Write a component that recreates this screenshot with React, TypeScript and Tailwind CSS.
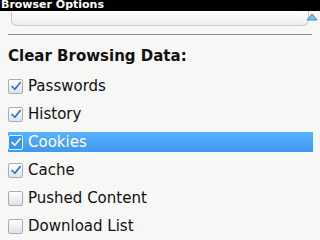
const items = [
  { label: "Passwords", checked: true },
  { label: "History", checked: true },
  { label: "Cookies", checked: true, selected: true },
  { label: "Cache", checked: true },
  { label: "Pushed Content", checked: false },
  { label: "Download List", checked: false },
];

const Check = ({ checked, selected }: { checked: boolean; selected?: boolean }) => (
  <div
    className={
      "w-[15px] h-[15px] rounded-[2px] border flex items-center justify-center shrink-0 " +
      (selected
        ? "border-[#e6f2ff] bg-[#3d95ec]"
        : "border-[#a9adb2] bg-gradient-to-b from-[#ffffff] to-[#dfe3e7]")
    }
  >
    {checked && (
      <svg width="12" height="12" viewBox="0 0 12 12">
        <path
          d="M2 6.5 L4.8 9.3 L10.3 2.5"
          fill="none"
          stroke={selected ? "#ffffff" : "#2b6fc4"}
          strokeWidth="1.6"
          strokeLinecap="round"
          strokeLinejoin="round"
        />
      </svg>
    )}
  </div>
);

export default function App() {
  return (
    <div className="w-[320px] h-[240px] overflow-hidden bg-[#f7f7f5] font-['DejaVu_Sans',sans-serif] flex flex-col">
      <div className="h-[11px] shrink-0 bg-black text-white text-[11px] font-bold leading-[9px] pl-[1px] overflow-hidden">
        Browser Options
      </div>
      <div className="mx-[11px] h-[15px] shrink-0 rounded-b-[6px] border border-t-0 border-[#c9ccce] bg-gradient-to-b from-[#ffffff] to-[#eceef0] relative">
        <svg className="absolute right-[-10px] top-[2px]" width="12" height="8" viewBox="0 0 12 8">
          <path d="M6 1 L11 7 L1 7 Z" fill="#7ec3ee" stroke="#3a8fc8" strokeWidth="1" />
        </svg>
      </div>
      <div className="mt-[8px] mx-[8px] h-[1px] shrink-0 bg-[#8a8a8a]" />
      <div className="mt-[13px] pl-[8px] text-[15px] font-bold text-[#111] leading-[16px]">
        Clear Browsing Data:
      </div>
      <div className="mt-[8px] flex flex-col">
        {items.map((it) => (
          <div key={it.label} className="h-[28px] mx-[7px] flex items-center pl-[1px]">
            <div
              className={
                "flex items-center gap-[5px] w-full h-[20px] " +
                (it.selected ? "bg-gradient-to-b from-[#5ab2ff] to-[#3f97f0] text-white" : "text-[#111]")
              }
            >
              <Check checked={it.checked} selected={it.selected} />
              <span className="text-[15px] leading-[18px]">{it.label}</span>
            </div>
          </div>
        ))}
      </div>
    </div>
  );
}
